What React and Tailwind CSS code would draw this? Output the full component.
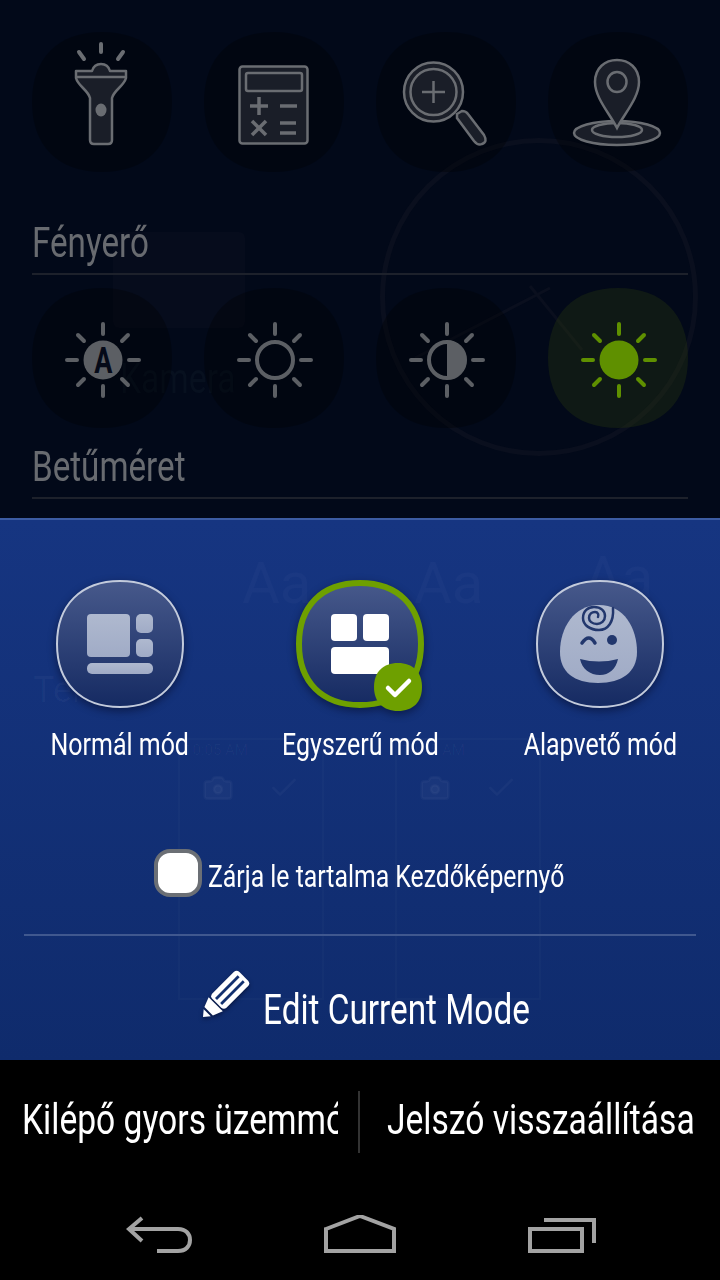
import { Camera, Check } from "lucide-react";

const squircle = "M64 0C104 0 128 24 128 64C128 104 104 128 64 128C24 128 0 104 0 64C0 24 24 0 64 0Z";
const tilePath = "M70 0C114 0 140 26 140 70C140 114 114 140 70 140C26 140 0 114 0 70C0 26 26 0 70 0Z";
const rayLines = [
  [71, 36, 71, 46], [71, 98, 71, 108], [35, 72, 45, 72], [97, 72, 107, 72],
  [46, 47, 52, 53], [96, 47, 90, 53], [46, 97, 52, 91], [96, 97, 90, 91],
];

function Tile({ fill = "rgba(0,0,0,0.3)", children }) {
  return (
    <svg width="140" height="140" viewBox="0 0 140 140" className="block shrink-0">
      <path d={tilePath} fill={fill} />
      {children}
    </svg>
  );
}

function Sun({ kind }) {
  const color = kind === "on" ? "#5f9000" : "#5c5f64";
  return (
    <Tile fill={kind === "on" ? "rgba(50,70,10,0.28)" : undefined}>
      {rayLines.map((r, i) => (
        <line key={i} x1={r[0]} y1={r[1]} x2={r[2]} y2={r[3]} stroke={color} strokeWidth="4" strokeLinecap="round" />
      ))}
      {kind === "on" && <circle cx="71" cy="72" r="19.5" fill={color} />}
      {kind === "auto" && (
        <>
          <circle cx="71" cy="72" r="19.5" fill={color} />
          <text x="71" y="85" textAnchor="middle" fontSize="36" fontWeight="700" fill="#050a18" fontFamily="Roboto, sans-serif" transform="translate(18 0) scale(0.75 1)">A</text>
        </>
      )}
      {kind === "off" && <circle cx="71" cy="72" r="18" fill="none" stroke={color} strokeWidth="4" />}
      {kind === "half" && (
        <>
          <circle cx="71" cy="72" r="18" fill="none" stroke={color} strokeWidth="4" />
          <path d="M71 52.5A19.5 19.5 0 0 1 71 91.5Z" fill={color} />
        </>
      )}
    </Tile>
  );
}

function ModeIcon({ selected, children }) {
  return (
    <svg width="136" height="140" viewBox="-4 0 136 140" className="block overflow-visible drop-shadow-[0_3px_4px_rgba(0,0,20,0.45)]">
      <defs>
        <linearGradient id="modeBg" x1="0" y1="0" x2="0" y2="1">
          <stop offset="0" stopColor="#47598b" />
          <stop offset="1" stopColor="#152a62" />
        </linearGradient>
        <linearGradient id="glyph" x1="0" y1="0" x2="0" y2="1">
          <stop offset="0" stopColor="#afb9cf" />
          <stop offset="1" stopColor="#a0abc6" />
        </linearGradient>
      </defs>
      <path
        d={selected ? "M64 3C102 3 125 26 125 64C125 102 102 125 64 125C26 125 3 102 3 64C3 26 26 3 64 3Z" : "M64 1C103 1 127 25 127 64C127 103 103 127 64 127C25 127 1 103 1 64C1 25 25 1 64 1Z"}
        fill="url(#modeBg)"
        stroke={selected ? "#6ea000" : "#c3cbdc"}
        strokeWidth={selected ? 6 : 2}
      />
      {children}
    </svg>
  );
}

function Label({ children, className }) {
  return (
    <span className={"inline-block whitespace-nowrap text-white " + className}>{children}</span>
  );
}

function GhostPhone({ left }) {
  return (
    <div style={{ left }} className="absolute top-[218px] w-[146px] h-[262px] border-2 border-white/[0.02] text-white/[0.03]">
      <div className="text-[15px] pl-1 leading-5">10:05 AM</div>
      <div className="flex justify-between px-[22px] mt-[12px]">
        <Camera size={32} fill="currentColor" />
        <Check size={32} />
      </div>
    </div>
  );
}

export default function App() {
  const dim = "#6a6d72";
  const body = "#1a1e28";

  return (
    <div className="relative w-[720px] h-[1280px] overflow-hidden bg-black font-['Roboto',sans-serif]">
      <div className="relative h-[518px] overflow-hidden bg-[#020919] px-8 pt-8">
        {/* faint home screen behind the dim */}
        <div className="absolute left-[380px] top-[138px] w-[318px] h-[318px] rounded-full border-[5px] border-[#0a0f1e]" />
        <svg width="180" height="110" viewBox="0 0 180 110" className="absolute left-[410px] top-[280px]" fill="none" stroke="#0a0f1e" strokeWidth="3">
          <path d="M5 78L140 8" />
          <path d="M120 6L172 70" />
        </svg>
        <div className="absolute left-[113px] top-[232px] w-[132px] h-[96px] rounded-md bg-[#060c1c]" />
        <div className="absolute left-[120px] top-[358px] origin-left scale-x-[0.8] text-[42px] text-[#07101f] leading-none">Kamera</div>
        <div className="relative grid grid-cols-4 gap-x-8 h-[140px]">
          <Tile>
            <g stroke={dim} strokeWidth="2.5" fill={body} strokeLinejoin="round">
              <path d="M44 39L60 39Q62 32 69 32Q76 32 78 39L94 39L94 46C92 54 82 58 80 66L80 108Q80 112 76 112L62 112Q58 112 58 108L58 66C56 58 46 54 44 46Z" />
              <line x1="44" y1="45" x2="94" y2="45" />
            </g>
            <ellipse cx="69" cy="78" rx="5.5" ry="6.5" fill={dim} />
            <g stroke={dim} strokeWidth="4" strokeLinecap="round">
              <line x1="69" y1="12" x2="69" y2="20" />
              <line x1="47" y1="20" x2="52" y2="27" />
              <line x1="91" y1="20" x2="86" y2="27" />
            </g>
          </Tile>
          <Tile>
            <rect x="35.5" y="34.5" width="68" height="77" rx="3" fill={body} stroke={dim} strokeWidth="2.5" />
            <rect x="42" y="41" width="56" height="18" rx="2" fill="none" stroke={dim} strokeWidth="2.5" />
            <g stroke={dim} strokeWidth="3.5">
              <line x1="46" y1="74" x2="64" y2="74" />
              <line x1="55" y1="65" x2="55" y2="83" />
              <line x1="76" y1="74" x2="93" y2="74" />
              <line x1="48" y1="89" x2="62" y2="103" />
              <line x1="62" y1="89" x2="48" y2="103" />
              <line x1="76" y1="91" x2="92" y2="91" />
              <line x1="76" y1="101" x2="92" y2="101" />
            </g>
          </Tile>
          <Tile>
            <path d="M81 82L86 79Q90 79 92 82L108 103Q112 110 106 112Q102 114 98 109L81 86Z" fill={body} stroke={dim} strokeWidth="2.5" />
            <circle cx="57.5" cy="60" r="29.5" fill={body} stroke={dim} strokeWidth="2.5" />
            <circle cx="57.5" cy="60" r="23" fill="none" stroke={dim} strokeWidth="2.5" />
            <line x1="46" y1="60" x2="69" y2="60" stroke={dim} strokeWidth="2.5" />
            <line x1="57.5" y1="49" x2="57.5" y2="71" stroke={dim} strokeWidth="2.5" />
          </Tile>
          <Tile>
            <ellipse cx="69" cy="101" rx="43" ry="12" fill={body} stroke={dim} strokeWidth="2.5" />
            <ellipse cx="69" cy="98" rx="25" ry="7" fill="none" stroke={dim} strokeWidth="2.5" />
            <path d="M69 96C62 82 47 66 47 50C47 36 57 28 69 28C81 28 91 36 91 50C91 66 76 82 69 96Z" fill={body} stroke={dim} strokeWidth="2.5" />
            <ellipse cx="69" cy="50" rx="9.5" ry="10" fill="none" stroke={dim} strokeWidth="2.5" />
          </Tile>
        </div>

        <div className="relative mt-[48px] h-[55px] border-b-2 border-[#1d212b] text-[#686b70]">
          <div className="inline-block origin-left scale-x-[0.79] text-[42px] leading-[46px] whitespace-nowrap">Fényerő</div>
        </div>
        <div className="relative grid grid-cols-4 gap-x-8 mt-[13px] h-[140px]">
          <Sun kind="auto" />
          <Sun kind="off" />
          <Sun kind="half" />
          <Sun kind="on" />
        </div>
        <div className="relative mt-[16px] h-[55px] border-b-2 border-[#1d212b] text-[#686b70]">
          <div className="inline-block origin-left scale-x-[0.79] text-[42px] leading-[46px] whitespace-nowrap">Betűméret</div>
        </div>
      </div>

      <div className="relative h-[542px] overflow-hidden border-t-2 border-[#3c5ca3] bg-gradient-to-b from-[#163581] to-[#0f2b6c]">
        {/* faint ghosts of the settings and previews behind the panel */}
        <div className="absolute left-[242px] top-[34px] text-[58px] leading-none text-white/[0.025]">Aa</div>
        <div className="absolute left-[414px] top-[34px] text-[58px] leading-none text-white/[0.025]">Aa</div>
        <div className="absolute left-[584px] top-[28px] text-[58px] leading-none text-white/[0.025]">Aa</div>
        <div className="absolute left-[33px] top-[152px] text-[36px] leading-none text-white/[0.03]">Témák</div>
        <GhostPhone left={178} />
        <GhostPhone left={395} />

        <div className="relative grid grid-cols-3 pt-[60px]">
          <div className="flex flex-col items-center">
            <ModeIcon>
              <g fill="url(#glyph)">
                <rect x="31" y="34" width="43" height="43" rx="4" />
                <rect x="80" y="34" width="17" height="19" rx="5" />
                <rect x="80" y="59" width="17" height="18" rx="5" />
                <rect x="31" y="83" width="66" height="11" rx="5" />
              </g>
            </ModeIcon>
            <Label className="mt-[6px] scale-x-[0.78] text-[32px] leading-[36px]">Normál mód</Label>
          </div>
          <div className="flex flex-col items-center">
            <ModeIcon selected>
              <g fill="#fff">
                <rect x="35" y="34" width="26" height="27" rx="4" />
                <rect x="67" y="34" width="26" height="27" rx="4" />
                <rect x="35" y="67" width="58" height="27" rx="4" />
              </g>
              <path d={squircle} transform="translate(78 83) scale(0.375)" fill="#6ea000" />
              <path d="M92 108L99 115L113 101" fill="none" stroke="#fff" strokeWidth="4.5" strokeLinecap="round" strokeLinejoin="round" />
            </ModeIcon>
            <Label className="mt-[6px] scale-x-[0.78] text-[32px] leading-[36px]">Egyszerű mód</Label>
          </div>
          <div className="flex flex-col items-center">
            <ModeIcon>
              <path d="M63 25C88 25 101 48 101 72C101 92 86 103 62 103C38 103 24 92 24 72C24 48 38 25 63 25Z" fill="url(#glyph)" />
              <path d="M77 28C78 42 72 50 63 50C54 50 47 45 47 38C47 31 52 27 58 27C65 27 69 31 69 36C69 41 65 44 61 44C56 44 53 41 53 38C53 34 56 32 59 32C62 32 63 35 62 37" fill="none" stroke="#22376d" strokeWidth="2.5" strokeLinecap="round" />
              <path d="M46 63Q53 53 59 63" fill="none" stroke="#22376d" strokeWidth="3.5" strokeLinecap="round" />
              <circle cx="76" cy="60" r="5" fill="#22376d" />
              <path d="M44 79Q63 84 82 79C80 89 73 95 64 95C54 95 46 89 44 79Z" fill="#22376d" />
            </ModeIcon>
            <Label className="mt-[6px] scale-x-[0.78] text-[32px] leading-[36px]">Alapvető mód</Label>
          </div>
        </div>

        <div className="relative flex items-center pl-[154px] mt-[86px] h-[50px]">
          <div className="w-12 h-12 shrink-0 rounded-[16px] border-[4px] border-[#6b6f75] bg-white" />
          <Label className="origin-left ml-[6px] mt-[8px] scale-x-[0.8] text-[31px] leading-[36px]">Zárja le tartalma Kezdőképernyő</Label>
        </div>

        <div className="relative mx-6 mt-[36px] h-[2px] bg-[#40588f]" />

        <div className="relative flex items-start pl-[200px] mt-[34px]">
          <svg width="54" height="54" viewBox="0 0 54 54" className="block shrink-0 drop-shadow-[0_2px_2px_rgba(0,0,20,0.5)]">
            <g transform="translate(3 47) rotate(-45)">
              <path d="M0 0L6 -5L6 5Z" fill="#fff" />
              <path d="M8 -6L18 -10L18 10L8 6Z" fill="#fff" />
              <rect x="19.5" y="-10" width="38" height="20" rx="4" fill="#fff" />
              <rect x="22" y="-5" width="32" height="2.8" fill="#12306f" />
              <rect x="22" y="2.2" width="32" height="2.8" fill="#12306f" />
            </g>
          </svg>
          <Label className="origin-left ml-[9px] mt-[14px] scale-x-[0.775] text-[43px] leading-[50px]">Edit Current Mode</Label>
        </div>
      </div>

      <div className="h-[220px] bg-black">
        <div className="flex items-center h-[120px]">
          <div className="w-[338px] shrink-0 pl-[22px] overflow-hidden">
            <Label className="origin-left scale-x-[0.8] text-[42px] leading-[60px]">Kilépő gyors üzemmód</Label>
          </div>
          <div className="ml-5 mt-1 w-[2px] h-[62px] shrink-0 bg-[#333333]" />
          <div className="ml-[27px] flex-1">
            <Label className="origin-left scale-x-[0.8] text-[42px] leading-[60px]">Jelszó visszaállítása</Label>
          </div>
        </div>
        <div className="flex gap-[128px] pl-[126px] pt-[35px] h-[100px]">
          <svg width="68" height="40" viewBox="0 0 68 40" fill="none" stroke="#a3a3a3" strokeWidth="4" className="block">
            <path d="M16 3L3 14L16 26" />
            <path d="M3 14L52 14C60 14 64 19 64 25C64 31 60 36 52 36L31 36" />
          </svg>
          <svg width="76" height="40" viewBox="0 0 76 40" fill="none" stroke="#a3a3a3" strokeWidth="4" className="block">
            <path d="M4 14L38 1L72 14L72 36L4 36Z" />
          </svg>
          <svg width="72" height="40" viewBox="0 0 72 40" fill="none" stroke="#a3a3a3" strokeWidth="4" className="block">
            <rect x="4" y="14" width="52" height="22" />
            <path d="M18 5L68 5L68 28" />
          </svg>
        </div>
      </div>
    </div>
  );
}
